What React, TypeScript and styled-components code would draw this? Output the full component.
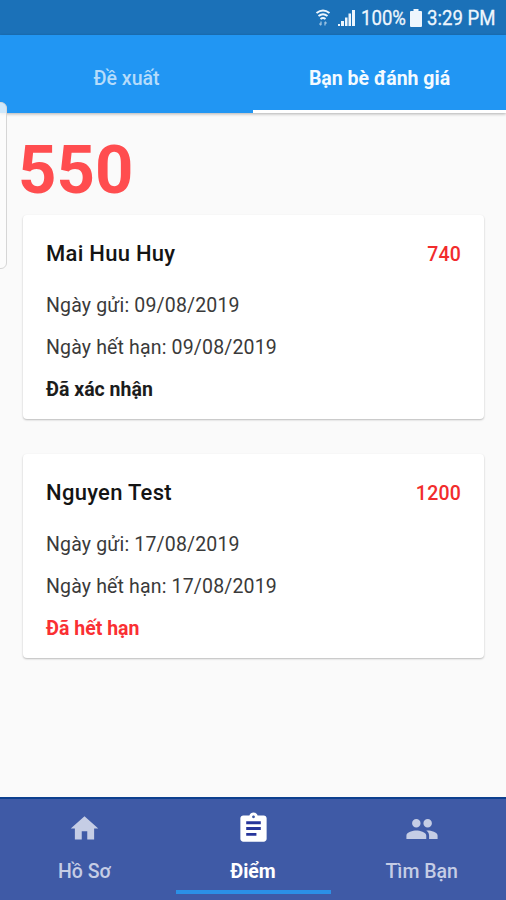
import React from "react";
import styled, { createGlobalStyle } from "styled-components";
import { MdAssignment, MdHome, MdPeople } from "react-icons/md";

const GlobalStyle = createGlobalStyle`
  * { box-sizing: border-box; }
  body { margin: 0; background: #fafafa; font-family: Roboto, "Noto Sans", sans-serif; }
`;

const Screen = styled.div`
  position: relative;
  display: flex;
  flex-direction: column;
  width: 506px;
  height: 900px;
  overflow: hidden;
  background: #fafafa;
`;

const StatusBar = styled.header`
  display: flex;
  align-items: center;
  justify-content: flex-end;
  height: 35px;
  flex: none;
  padding: 1px 9px 0 0;
  background: #1b71b8;
  color: #eef6fd;
  font-size: 21px;
  line-height: 32px;
`;

const WifiIcon = styled.svg`
  margin-right: 7px;
`;

const SignalIcon = styled.svg`
  margin-right: 6px;
`;

const BatteryIcon = styled.svg`
  margin: 0 5px 0 4px;
`;

const StatusText = styled.span<{ $width: number }>`
  width: ${(p) => p.$width}px;
  white-space: nowrap;
  span {
    display: inline-block;
    transform: scaleX(0.885);
    transform-origin: 0 50%;
    -webkit-text-stroke: 0.3px currentColor;
  }
`;

const TabBar = styled.nav`
  display: grid;
  grid-template-columns: 1fr 1fr;
  height: 78px;
  flex: none;
  background: #2196f3;
  box-shadow: 0 1px 3px rgba(0, 0, 0, 0.3);
  z-index: 1;
`;

const Tab = styled.div<{ $active?: boolean }>`
  display: flex;
  align-items: center;
  justify-content: center;
  padding-top: ${(p) => (p.$active ? 11 : 8)}px;
  border-bottom: ${(p) => (p.$active ? "3px solid #fff" : "none")};
  color: ${(p) => (p.$active ? "#f4faff" : "#b5dcfb")};
  font-size: 19.5px;
  font-weight: ${(p) => (p.$active ? 700 : 500)};
`;

const EdgeHandle = styled.div`
  position: absolute;
  z-index: 2;
  left: -6px;
  top: 102px;
  width: 13px;
  height: 167px;
  border: 1px solid #d6d6d6;
  border-radius: 6px;
  background: rgba(252, 252, 252, 0.8);
`;

const Content = styled.main`
  flex: 1;
  padding: 20px 22px 0 23px;
`;

const Score = styled.div`
  height: 82px;
  margin-left: -5px;
  color: #ff4d4f;
  font-size: 67px;
  font-weight: 700;
  line-height: 75px;
`;

const Card = styled.article`
  height: 204px;
  margin-bottom: 35px;
  padding: 23px 23px 0;
  border-radius: 4px;
  background: #fff;
  box-shadow: 0 1px 2px rgba(0, 0, 0, 0.26);
`;

const CardHead = styled.div`
  display: flex;
  justify-content: space-between;
  height: 47px;
  line-height: 32px;
`;

const Name = styled.h2`
  margin: 0;
  color: #141414;
  font-size: 22px;
  font-weight: 500;
  letter-spacing: 0.28px;
`;

const Points = styled.span`
  color: #f22c2c;
  font-size: 19.5px;
  font-weight: 500;
  letter-spacing: 0.2px;
  line-height: 33px;
`;

const DateLine = styled.p`
  margin: 0;
  height: 42px;
  color: #3a3a3a;
  font-size: 19.5px;
  font-weight: 400;
  letter-spacing: 0.16px;
  line-height: 42px;
`;

const Status = styled.p<{ $expired?: boolean }>`
  margin: 0;
  color: ${(p) => (p.$expired ? "#fa2f33" : "#1c1c1c")};
  font-size: 19.5px;
  font-weight: 700;
  line-height: 42px;
`;

const BottomNav = styled.nav`
  display: grid;
  grid-template-columns: 1fr 1fr 1fr;
  height: 103px;
  flex: none;
  border-top: 2px solid #0d3f8e;
  background: #3f5aa6;
`;

const NavItem = styled.div<{ $active?: boolean }>`
  display: flex;
  flex-direction: column;
  align-items: center;
  padding-top: 12px;
  color: ${(p) => (p.$active ? "#fff" : "#c5cde5")};
  font-size: 19.5px;
  font-weight: ${(p) => (p.$active ? 700 : 500)};
`;

const NavIcon = styled.span<{ $active?: boolean }>`
  display: flex;
  align-items: center;
  justify-content: center;
  width: 35px;
  height: 35px;
  margin-left: 1px;
  background: ${(p) =>
    p.$active ? "linear-gradient(#26359b, #26359b) center / 16px 15px no-repeat" : "none"};
`;

const NavLabel = styled.span`
  margin-top: 10px;
  line-height: 32px;
`;

const NavIndicator = styled.i`
  width: 155px;
  height: 4px;
  margin: 2px 0 0 1px;
  background: #2b90e6;
`;

const records = [
  { name: "Mai Huu Huy", points: "740", date: "09/08/2019", status: "Đã xác nhận", expired: false },
  { name: "Nguyen Test", points: "1200", date: "17/08/2019", status: "Đã hết hạn", expired: true },
];

export default function App() {
  return (
    <>
      <GlobalStyle />
      <Screen>
        <StatusBar>
          <WifiIcon width="16" height="18" viewBox="0 0 16 18" fill="none" stroke="currentColor">
            <path d="M1.500 4Q8-1 14.500 4M3.500 7Q8 3.500 12.500 7M5.500 10Q8 8 10.500 10" strokeWidth="2" />
            <path d="M6 12.500V16M4.500 14.500L6 16.300M10 16.500V13M11.500 14.500L10 12.700" strokeWidth="1.300" opacity="0.6" />
          </WifiIcon>
          <SignalIcon width="17" height="18" viewBox="0 0 17 18" fill="currentColor">
            <path d="M0 15h2v2H0zM3 12h3v5H3zM7 8.500h2.500v8.500H7zM10.500 4.500H13V17h-2.500zM14 1h3v16h-3z" />
          </SignalIcon>
          <StatusText $width={45}><span>100%</span></StatusText>
          <BatteryIcon width="12" height="18" viewBox="0 0 12 18" fill="currentColor">
            <path d="M3.500 0h5v2H11q1 0 1 1v14q0 1-1 1H1q-1 0-1-1V3q0-1 1-1h2.500z" />
          </BatteryIcon>
          <StatusText $width={70}><span>3:29 PM</span></StatusText>
        </StatusBar>
        <TabBar>
          <Tab>Đề xuất</Tab>
          <Tab $active>Bạn bè đánh giá</Tab>
        </TabBar>
        <EdgeHandle />
        <Content>
          <Score>550</Score>
          {records.map((r) => (
            <Card key={r.name}>
              <CardHead>
                <Name>{r.name}</Name>
                <Points>{r.points}</Points>
              </CardHead>
              <DateLine>Ngày gửi: {r.date}</DateLine>
              <DateLine>Ngày hết hạn: {r.date}</DateLine>
              <Status $expired={r.expired}>{r.status}</Status>
            </Card>
          ))}
        </Content>
        <BottomNav>
          <NavItem>
            <NavIcon><MdHome size={33} /></NavIcon>
            <NavLabel>Hồ Sơ</NavLabel>
          </NavItem>
          <NavItem $active>
            <NavIcon $active><MdAssignment size={35} /></NavIcon>
            <NavLabel>Điểm</NavLabel>
            <NavIndicator />
          </NavItem>
          <NavItem>
            <NavIcon><MdPeople size={34} /></NavIcon>
            <NavLabel>Tìm Bạn</NavLabel>
          </NavItem>
        </BottomNav>
      </Screen>
    </>
  );
}
